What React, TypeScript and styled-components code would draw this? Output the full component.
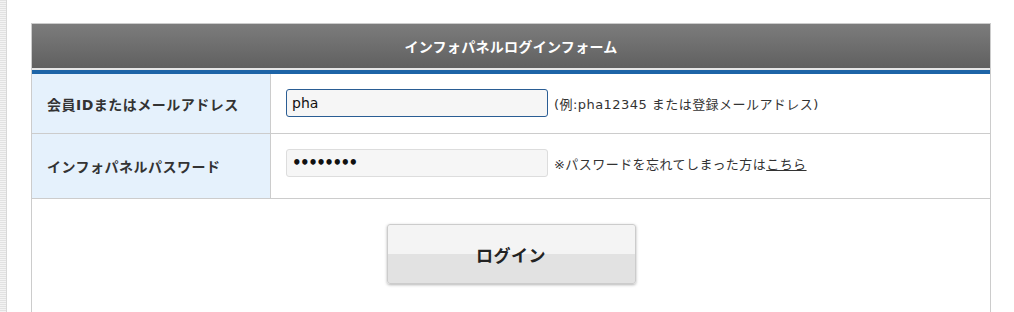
import React from "react";
import styled, { createGlobalStyle } from "styled-components";

const FONT = `"DejaVu Sans", "Noto Sans CJK JP", "Noto Sans", sans-serif`;

const GlobalStyle = createGlobalStyle`
  html, body { margin: 0; padding: 0; background: #fff; }
  body {
    font-family: ${FONT};
    color: #333;
  }
`;

const Page = styled.div`
  display: flex;
  width: 1014px;
  height: 312px;
  overflow: hidden;
`;

const Strip = styled.div`
  width: 6px;
  flex: none;
  background: repeating-linear-gradient(to bottom, #e2e2e2 0 1px, #f3f3f3 1px 2px);
  border-right: 1px solid #d8d8d8;
`;

const Content = styled.div`
  flex: 1;
  padding: 23px 23px 0 24px;
`;

const Panel = styled.div`
  width: 958px;
  border: 1px solid #cccccc;
  border-bottom: none;
`;

const Header = styled.div`
  height: 44px;
  display: flex;
  align-items: center;
  justify-content: center;
  background: linear-gradient(to bottom, #7c7c7c, #606060);
  color: #fff;
  font-weight: bold;
  font-size: 14px;
  letter-spacing: 0.3px;
  border-bottom: 2px solid #e6e6e6;
`;

const BlueBar = styled.div`
  height: 4px;
  background: #1d64a7;
`;

const Row = styled.div<{ $h: number }>`
  display: grid;
  grid-template-columns: 239px 1fr;
  height: ${(p) => p.$h}px;
  border-bottom: 1px solid #cccccc;
`;

const Label = styled.div`
  background: #e5f1fc;
  border-right: 1px solid #cccccc;
  display: flex;
  align-items: center;
  padding-left: 15px;
  font-size: 14px;
  font-weight: bold;
  letter-spacing: 0.5px;
  color: #333;
`;

const Field = styled.div<{ $top: number }>`
  display: flex;
  align-items: center;
  align-self: start;
  margin-top: ${(p) => p.$top}px;
  padding-left: 15px;
  gap: 6px;
`;

const Input = styled.input<{ $focus?: boolean; $secret?: boolean }>`
  box-sizing: border-box;
  width: 262px;
  height: 28px;
  padding: 0 5px;
  border: 1px solid ${(p) => (p.$focus ? "#2a5d94" : "#dddddd")};
  border-radius: 3px;
  background: #f6f6f6;
  font-family: ${FONT};
  font-size: ${(p) => (p.$secret ? "15px" : "14px")};
  font-weight: ${(p) => (p.$secret ? "bold" : "normal")};
  letter-spacing: ${(p) => (p.$secret ? "-1.5px" : "0")};
  color: #111;
  outline: none;
`;

const Hint = styled.span`
  font-size: 13px;
  letter-spacing: 0.45px;
  color: #333;
  white-space: nowrap;
`;

const Link = styled.a`
  color: #333;
  text-decoration: underline;
`;

const ButtonArea = styled.div`
  display: flex;
  justify-content: center;
  padding-top: 25px;
  height: 120px;
`;

const LoginButton = styled.button`
  box-sizing: border-box;
  width: 249px;
  height: 60px;
  border: 1px solid #cccccc;
  border-radius: 3px;
  background: linear-gradient(to bottom, #f4f4f4 0, #f4f4f4 50%, #e2e2e2 50%, #e2e2e2 100%);
  box-shadow: 0 1px 3px rgba(0, 0, 0, 0.3);
  font-family: ${FONT};
  font-size: 17px;
  font-weight: bold;
  letter-spacing: 0.5px;
  color: #222;
  cursor: pointer;
`;

export default function App() {
  return (
    <>
      <GlobalStyle />
      <Page>
        <Strip />
        <Content>
          <Panel>
            <Header>インフォパネルログインフォーム</Header>
            <BlueBar />
            <Row $h={59}>
              <Label>会員IDまたはメールアドレス</Label>
              <Field $top={15}>
                <Input $focus type="text" defaultValue="pha" />
                <Hint>(例:pha12345 または登録メールアドレス)</Hint>
              </Field>
            </Row>
            <Row $h={64}>
              <Label>インフォパネルパスワード</Label>
              <Field $top={15}>
                <Input $secret type="password" defaultValue="12345678" />
                <Hint>
                  ※パスワードを忘れてしまった方は<Link href="#">こちら</Link>
                </Hint>
              </Field>
            </Row>
            <ButtonArea>
              <LoginButton>ログイン</LoginButton>
            </ButtonArea>
          </Panel>
        </Content>
      </Page>
    </>
  );
}
